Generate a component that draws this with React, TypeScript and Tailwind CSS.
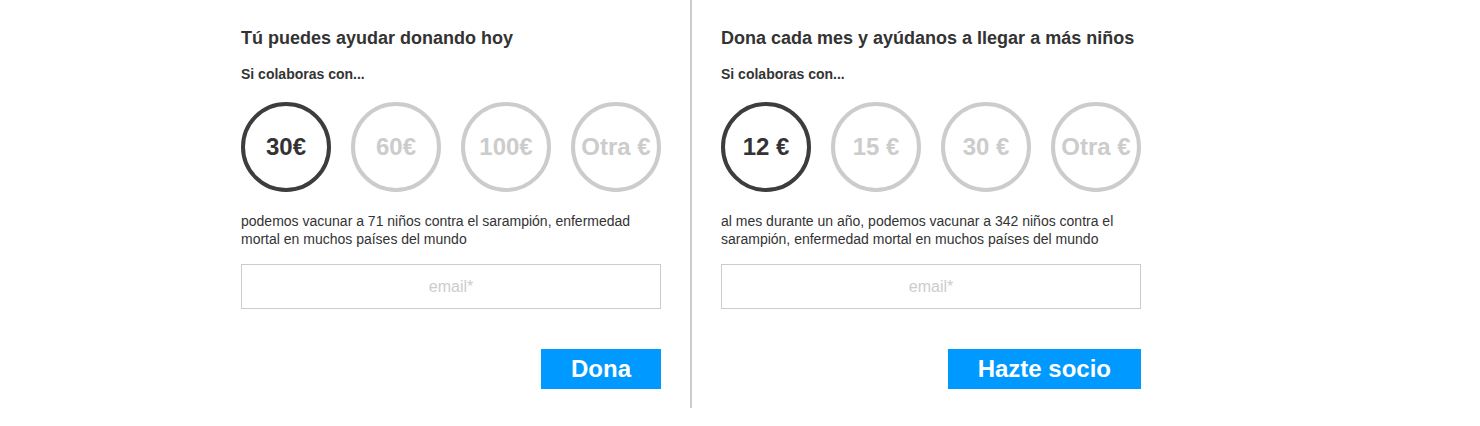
import React from "react";

type PanelProps = {
  title: string;
  amounts: string[];
  text: string;
  button: string;
  className?: string;
};

function Panel({ title, amounts, text, button, className }: PanelProps) {
  return (
    <div className={className}>
      <div className="w-[420px] flex flex-col">
        <h2 className="text-[18px] leading-[20px] font-bold text-[#333]">{title}</h2>
        <p className="mt-[18px] text-[14px] leading-[16px] font-bold text-[#333]">Si colaboras con...</p>
        <div className="mt-[20px] flex gap-[20px]">
          {amounts.map((a, i) => (
            <div
              key={a}
              className={
                i === 0
                  ? "w-[90px] h-[90px] rounded-full border-[4px] border-[#3d3d3d] flex items-center justify-center text-[24px] font-bold text-[#333]"
                  : "w-[90px] h-[90px] rounded-full border-[4px] border-[#cccccc] flex items-center justify-center text-[24px] font-bold text-[#cccccc]"
              }
            >
              {a}
            </div>
          ))}
        </div>
        <p className="mt-[20px] text-[14px] leading-[18px] text-[#333]">{text}</p>
        <div className="mt-[16px] h-[45px] border border-[#cccccc] flex items-center justify-center text-[16px] text-[#cccccc]">
          email*
        </div>
        <div className="mt-[40px] flex justify-end">
          <div className="h-[40px] px-[30px] bg-[#0099ff] text-white text-[24px] font-bold flex items-center justify-center">
            {button}
          </div>
        </div>
      </div>
    </div>
  );
}

export default function App() {
  return (
    <div
      className="w-[1480px] h-[426px] bg-white"
      style={{ fontFamily: '"Liberation Sans", Arial, sans-serif' }}
    >
      <div className="flex ml-[211px]">
        <Panel
          className="pl-[30px] pr-[29px] pt-[28px] pb-[19px] border-r-2 border-[#cccccc]"
          title="Tú puedes ayudar donando hoy"
          amounts={["30€", "60€", "100€", "Otra €"]}
          text="podemos vacunar a 71 niños contra el sarampión, enfermedad mortal en muchos países del mundo"
          button="Dona"
        />
        <Panel
          className="pl-[29px] pt-[28px] pb-[19px]"
          title="Dona cada mes y ayúdanos a llegar a más niños"
          amounts={["12 €", "15 €", "30 €", "Otra €"]}
          text="al mes durante un año, podemos vacunar a 342 niños contra el sarampión, enfermedad mortal en muchos países del mundo"
          button="Hazte socio"
        />
      </div>
    </div>
  );
}
